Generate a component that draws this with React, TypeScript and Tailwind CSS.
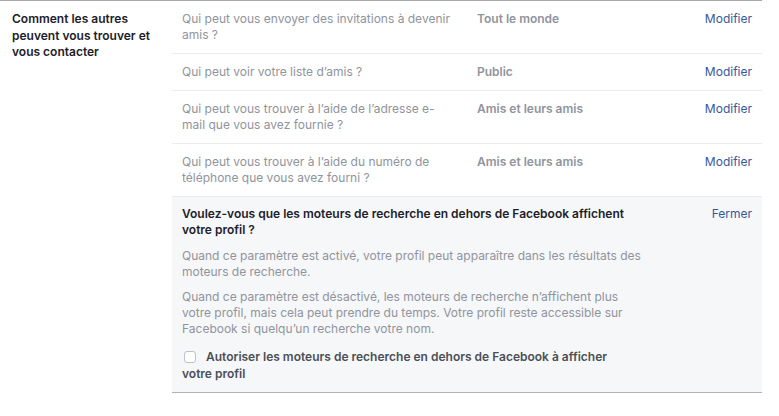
const rows = [
  { q: "Qui peut vous envoyer des invitations à devenir amis ?", v: "Tout le monde" },
  { q: "Qui peut voir votre liste d’amis ?", v: "Public" },
  { q: "Qui peut vous trouver à l’aide de l’adresse e-mail que vous avez fournie ?", v: "Amis et leurs amis" },
  { q: "Qui peut vous trouver à l’aide du numéro de téléphone que vous avez fourni ?", v: "Amis et leurs amis" },
];

export default function App() {
  return (
    <div className="w-[779px] h-[416px] bg-white font-['Inter','Liberation_Sans',Arial,sans-serif] text-[12px] leading-[16px]">
      <div className="w-[762px] flex border-t border-[#a8a8a8]">
        <div className="w-[172px] shrink-0 pl-3 pr-4 pt-[10px] font-semibold text-[#1d2129] leading-[16.5px]">
          Comment les autres peuvent vous trouver et vous contacter
        </div>
        <div className="flex-1">
          {rows.map((r, i) => (
            <div key={i} className="flex py-[10px] pl-[10px] pr-[10px] border-b border-[#e9ebee]">
              <div className="w-[272px] shrink-0 text-[#90949c]">{r.q}</div>
              <div className="flex-1 pl-[23px] font-semibold text-[#90949c]">{r.v}</div>
              <a className="text-[#365899] cursor-pointer">Modifier</a>
            </div>
          ))}
          <div className="bg-[#f6f7f9] px-[10px] pt-[9px] pb-[10px] border-b border-[#b3b3b3]">
            <div className="flex justify-between">
              <div className="w-[462px] font-semibold text-[#1d2129]">
                Voulez-vous que les moteurs de recherche en dehors de Facebook affichent votre profil ?
              </div>
              <a className="text-[#365899] cursor-pointer">Fermer</a>
            </div>
            <p className="w-[462px] mt-[10px] text-[#90949c]">
              Quand ce paramètre est activé, votre profil peut apparaître dans les résultats des moteurs de recherche.
            </p>
            <p className="w-[462px] mt-[9px] text-[#90949c]">
              Quand ce paramètre est désactivé, les moteurs de recherche n’affichent plus votre profil, mais cela peut prendre du temps. Votre profil reste accessible sur Facebook si quelqu’un recherche votre nom.
            </p>
            <label className="block w-[440px] mt-[11px] leading-[17px] font-semibold text-[#4b4f56]">
              <span className="inline-block align-[-2px] w-[12px] h-[12px] ml-[2px] mr-[10px] rounded-[3px] border border-[#bec2c9] bg-white"></span>
              Autoriser les moteurs de recherche en dehors de Facebook à afficher votre profil
            </label>
          </div>
        </div>
      </div>
    </div>
  );
}
